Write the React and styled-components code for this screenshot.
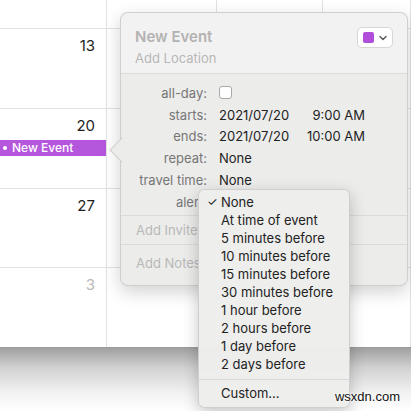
import React from 'react';
import styled, { createGlobalStyle } from 'styled-components';

const GlobalStyle = createGlobalStyle`
  html, body {
    margin: 0;
    padding: 0;
    background: #ffffff;
  }
  body {
    font-family: Inter, "Liberation Sans", sans-serif;
    -webkit-font-smoothing: antialiased;
  }
`;

const Screen = styled.div`
  position: relative;
  width: 411px;
  height: 411px;
  overflow: hidden;
  background: linear-gradient(to bottom, #a0a0a0 0px, #d2d2d2 20px, #f2f2f2 45px, #ffffff 63px);
  background-position: 0 348px;
  background-repeat: no-repeat;
  background-size: 100% 63px;
`;

const Calendar = styled.div`
  display: flex;
  flex-direction: column;
  height: 348px;
  background: #ffffff;
  border-bottom: 1px solid #9c9c9c;
  box-sizing: border-box;
`;

const Week = styled.div`
  display: grid;
  grid-template-columns: 107px 110px 106px 1fr;
  height: ${p => p.$h}px;
  border-bottom: ${p => (p.$last ? 'none' : '1px solid #e2e2e2')};
  box-sizing: border-box;
`;

const Day = styled.div`
  position: relative;
  border-right: 1px solid #e2e2e2;
  display: flex;
  flex-direction: column;
  align-items: stretch;
`;

const DayNum = styled.div`
  text-align: right;
  padding: 8px 11px 0 0;
  font-size: 15px;
  line-height: 18px;
  color: ${p => (p.$dim ? '#b8b8b8' : '#1e1e1e')};
`;

const EventBar = styled.div`
  margin-top: 5px;
  height: 16px;
  background: #b557dc;
  color: #ffffff;
  font-size: 12px;
  font-weight: 500;
  line-height: 16px;
  padding-left: 3px;
  display: flex;
  align-items: center;
  gap: 5px;
`;

const Dot = styled.span`
  width: 4px;
  height: 4px;
  border-radius: 50%;
  background: #ffffff;
`;

const Popover = styled.div`
  position: absolute;
  left: 120px;
  top: 12px;
  width: 288px;
  height: 274px;
  background: #ececeb;
  border: 1px solid rgba(0, 0, 0, 0.12);
  border-radius: 8px;
  box-shadow: 0 6px 18px rgba(0, 0, 0, 0.18);
  box-sizing: border-box;
  display: flex;
  flex-direction: column;
`;

const Arrow = styled.div`
  position: absolute;
  left: -8px;
  top: 128px;
  width: 17px;
  height: 17px;
  background: #ececeb;
  border-left: 1px solid rgba(0, 0, 0, 0.12);
  border-bottom: 1px solid rgba(0, 0, 0, 0.12);
  transform: rotate(45deg);
`;

const Header = styled.div`
  position: relative;
  height: 61px;
  padding: 14px 14px 0 14px;
  box-sizing: border-box;
  background: #f3f2f2;
  border-radius: 8px 8px 0 0;
  border-bottom: 1px solid #dddcdc;
  display: flex;
  justify-content: space-between;
  align-items: flex-start;
`;

const TitleCol = styled.div`
  display: flex;
  flex-direction: column;
  gap: 3px;
`;

const Title = styled.div`
  font-size: 15px;
  font-weight: 600;
  color: #b3b2b2;
  line-height: 20px;
`;

const Location = styled.div`
  font-size: 13px;
  color: #b8b7b7;
  line-height: 17px;
`;

const ColorButton = styled.div`
  margin-top: 0px;
  width: 36px;
  height: 21px;
  box-sizing: border-box;
  background: #ffffff;
  border: 1px solid #d6d6d6;
  border-radius: 5px;
  display: flex;
  align-items: center;
  justify-content: center;
  gap: 5px;
`;

const Swatch = styled.span`
  width: 11px;
  height: 11px;
  border-radius: 2px;
  background: #b14ed9;
`;

const Form = styled.div`
  padding-top: 8px;
  display: flex;
  flex-direction: column;
`;

const Row = styled.div`
  display: grid;
  grid-template-columns: 86px 1fr;
  column-gap: 12px;
  height: 21.8px;
  align-items: center;
  font-size: 13px;
`;

const Label = styled.div`
  text-align: right;
  color: #767676;
`;

const Value = styled.div`
  color: #222222;
  display: flex;
  align-items: center;
`;

const DateText = styled.span`
  width: 76px;
`;

const TimeText = styled.span`
  width: 70px;
  text-align: right;
`;

const Checkbox = styled.span`
  width: 11px;
  height: 11px;
  border: 1px solid #a8a8a8;
  border-radius: 3px;
  background: #ffffff;
`;

const Section = styled.div`
  height: ${p => p.$h}px;
  border-top: 1px solid #dcdbdb;
  padding-left: 15px;
  display: flex;
  align-items: center;
  font-size: 13px;
  color: #b9b8b8;
`;

const Menu = styled.div`
  position: absolute;
  left: 198px;
  top: 189px;
  width: 152px;
  height: 219px;
  box-sizing: border-box;
  padding-top: 3px;
  background: rgba(238, 238, 237, 0.98);
  border: 1px solid rgba(0, 0, 0, 0.13);
  border-radius: 6px;
  box-shadow: 0 5px 16px rgba(0, 0, 0, 0.22);
  display: flex;
  flex-direction: column;
`;

const MenuItem = styled.div`
  position: relative;
  height: 18px;
  line-height: 18px;
  padding-left: 22px;
  font-size: 13px;
  color: #222222;
  white-space: nowrap;
`;

const Check = styled.span`
  position: absolute;
  left: 8px;
  top: 0;
  font-size: 12px;
`;

const MenuSep = styled.div`
  height: 1px;
  background: #d8d8d8;
  margin: 6px 0 4px;
`;

const Watermark = styled.div`
  position: absolute;
  right: 11px;
  bottom: 7px;
  font-family: "Liberation Sans", Arial, sans-serif;
  font-size: 13px;
  color: #111111;
  text-shadow: 0 0 3px #ffffff, 0 0 3px #ffffff;
`;

const weeks = [
  { h: 29, nums: [] },
  { h: 80, nums: ['13'] },
  { h: 81, nums: ['20'], event: true },
  { h: 79, nums: ['27'] },
  { h: 79, nums: ['3'], dim: true, last: true },
];

const alerts = [
  'None',
  'At time of event',
  '5 minutes before',
  '10 minutes before',
  '15 minutes before',
  '30 minutes before',
  '1 hour before',
  '2 hours before',
  '1 day before',
  '2 days before',
];

function Chevron() {
  return (
    <svg width="8" height="6" viewBox="0 0 8 6">
      <path d="M1 1.5 L4 4.5 L7 1.5" fill="none" stroke="#555" strokeWidth="1.4" strokeLinecap="round" strokeLinejoin="round" />
    </svg>
  );
}

export default function App() {
  return (
    <Screen>
      <GlobalStyle />
      <Calendar>
        {weeks.map((w, i) => (
          <Week key={i} $h={w.h} $last={w.last}>
            <Day>
              {w.nums[0] && <DayNum $dim={w.dim}>{w.nums[0]}</DayNum>}
              {w.event && (
                <EventBar>
                  <Dot />
                  New Event
                </EventBar>
              )}
            </Day>
            <Day />
            <Day />
            <Day />
          </Week>
        ))}
      </Calendar>

      <Popover>
        <Arrow />
        <Header>
          <TitleCol>
            <Title>New Event</Title>
            <Location>Add Location</Location>
          </TitleCol>
          <ColorButton>
            <Swatch />
            <Chevron />
          </ColorButton>
        </Header>
        <Form>
          <Row>
            <Label>all-day:</Label>
            <Value><Checkbox /></Value>
          </Row>
          <Row>
            <Label>starts:</Label>
            <Value><DateText>2021/07/20</DateText><TimeText>9:00 AM</TimeText></Value>
          </Row>
          <Row>
            <Label>ends:</Label>
            <Value><DateText>2021/07/20</DateText><TimeText>10:00 AM</TimeText></Value>
          </Row>
          <Row>
            <Label>repeat:</Label>
            <Value>None</Value>
          </Row>
          <Row>
            <Label>travel time:</Label>
            <Value>None</Value>
          </Row>
          <Row>
            <Label>alert:</Label>
            <Value>None</Value>
          </Row>
        </Form>
        <Section $h={28} style={{ marginTop: 2 }}>Add Invitees</Section>
        <Section $h={36}>Add Notes or URL</Section>
      </Popover>

      <Menu>
        {alerts.map((a, i) => (
          <MenuItem key={a}>
            {i === 0 && <Check>✓</Check>}
            {a}
          </MenuItem>
        ))}
        <MenuSep />
        <MenuItem>Custom...</MenuItem>
      </Menu>

      <Watermark>wsxdn.com</Watermark>
    </Screen>
  );
}
